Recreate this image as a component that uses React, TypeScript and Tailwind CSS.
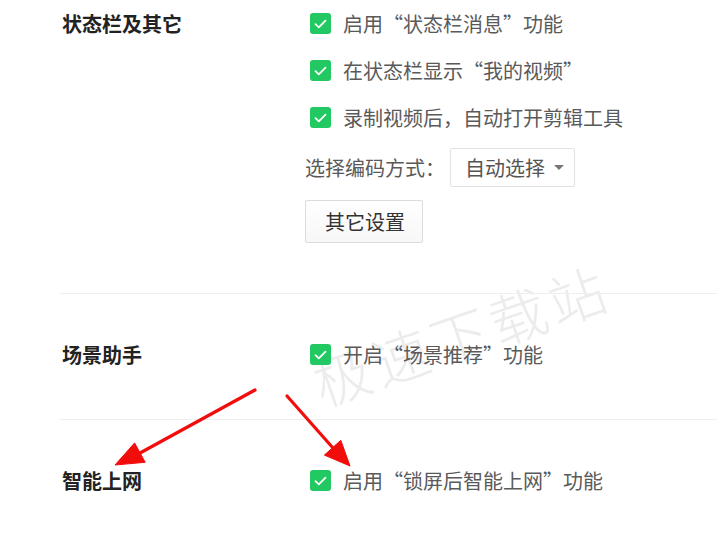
import { ReactNode } from 'react'

const font = { fontFamily: '"Noto Sans CJK SC", "Noto Sans", sans-serif' }

function CheckBox() {
  return (
    <span className="ml-[5px] flex h-[21px] w-[21px] shrink-0 items-center justify-center rounded-[3px] bg-[#22c861]">
      <svg width="13" height="10" viewBox="0 0 13 10" fill="none">
        <path d="M1.5 5.2 L4.8 8.3 L11.5 1.6" stroke="#fff" strokeWidth="1.8" strokeLinecap="round" strokeLinejoin="round" />
      </svg>
    </span>
  )
}

function CheckRow({ children }: { children: ReactNode }) {
  return (
    <div className="flex h-[47px] items-center gap-[12px] text-[20px] text-[#5a5a5a]">
      <CheckBox />
      <span>{children}</span>
    </div>
  )
}

interface SectionProps {
  title: string
  children: ReactNode
  className?: string
}

function Section({ title, children, className }: SectionProps) {
  return (
    <div className={'relative flex pl-[62px] ' + (className ?? '')}>
      <div className="flex h-[47px] w-[243px] shrink-0 items-center text-[20px] font-bold text-[#222]">
        {title}
      </div>
      <div className="flex flex-col">{children}</div>
    </div>
  )
}

function Arrows() {
  return (
    <svg className="pointer-events-none absolute left-0 top-0" width="717" height="538">
      <g fill="#f20d0d" stroke="#f20d0d">
        <line x1="255" y1="390" x2="140" y2="453" strokeWidth="3.2" strokeLinecap="round" />
        <polygon points="115,465 145.2,462.3 134.6,442.9" strokeWidth="1" />
        <line x1="287" y1="396" x2="333" y2="448" strokeWidth="3.2" strokeLinecap="round" />
        <polygon points="350,466 324.4,455.1 340.8,440.3" strokeWidth="1" />
      </g>
    </svg>
  )
}

export default function App() {
  return (
    <div className="relative h-[538px] w-[717px] overflow-hidden bg-white" style={font}>
      {/* watermark sits behind the content */}
      <div className="pointer-events-none absolute left-[296px] top-[291px] w-[330px] -rotate-[19deg] text-center text-[57px] font-light tracking-[5px] text-[#ececec]">
        极速下载站
      </div>

      <Section title="状态栏及其它">
        <CheckRow>启用“状态栏消息”功能</CheckRow>
        <CheckRow>在状态栏显示“我的视频”</CheckRow>
        <CheckRow>录制视频后，自动打开剪辑工具</CheckRow>
        <div className="mt-[7px] flex items-center text-[20px] text-[#5a5a5a]">
          <span className="w-[145px]">选择编码方式：</span>
          <div className="flex h-[39px] w-[125px] items-center justify-between rounded-[2px] border border-[#e2e2e2] bg-white pl-[14px] pr-[10px] text-[#555]">
            <span>自动选择</span>
            <span className="h-0 w-0 border-x-[5px] border-t-[5px] border-x-transparent border-t-[#777]" />
          </div>
        </div>
        <button className="mt-[13px] h-[43px] w-[118px] rounded-[2px] border border-[#dcdcdc] bg-gradient-to-b from-white to-[#f7f7f7] pl-[19px] text-left text-[20px] text-[#333]">
          其它设置
        </button>
      </Section>

      <div className="relative ml-[60px] mt-[50px] h-px bg-[#efefef]" />

      <Section title="场景助手" className="pt-[37px] pb-[41px]">
        <CheckRow>开启“场景推荐”功能</CheckRow>
      </Section>

      <div className="relative ml-[60px] h-px bg-[#efefef]" />

      <Section title="智能上网" className="pt-[37px]">
        <CheckRow>启用“锁屏后智能上网”功能</CheckRow>
      </Section>

      <Arrows />
    </div>
  )
}
